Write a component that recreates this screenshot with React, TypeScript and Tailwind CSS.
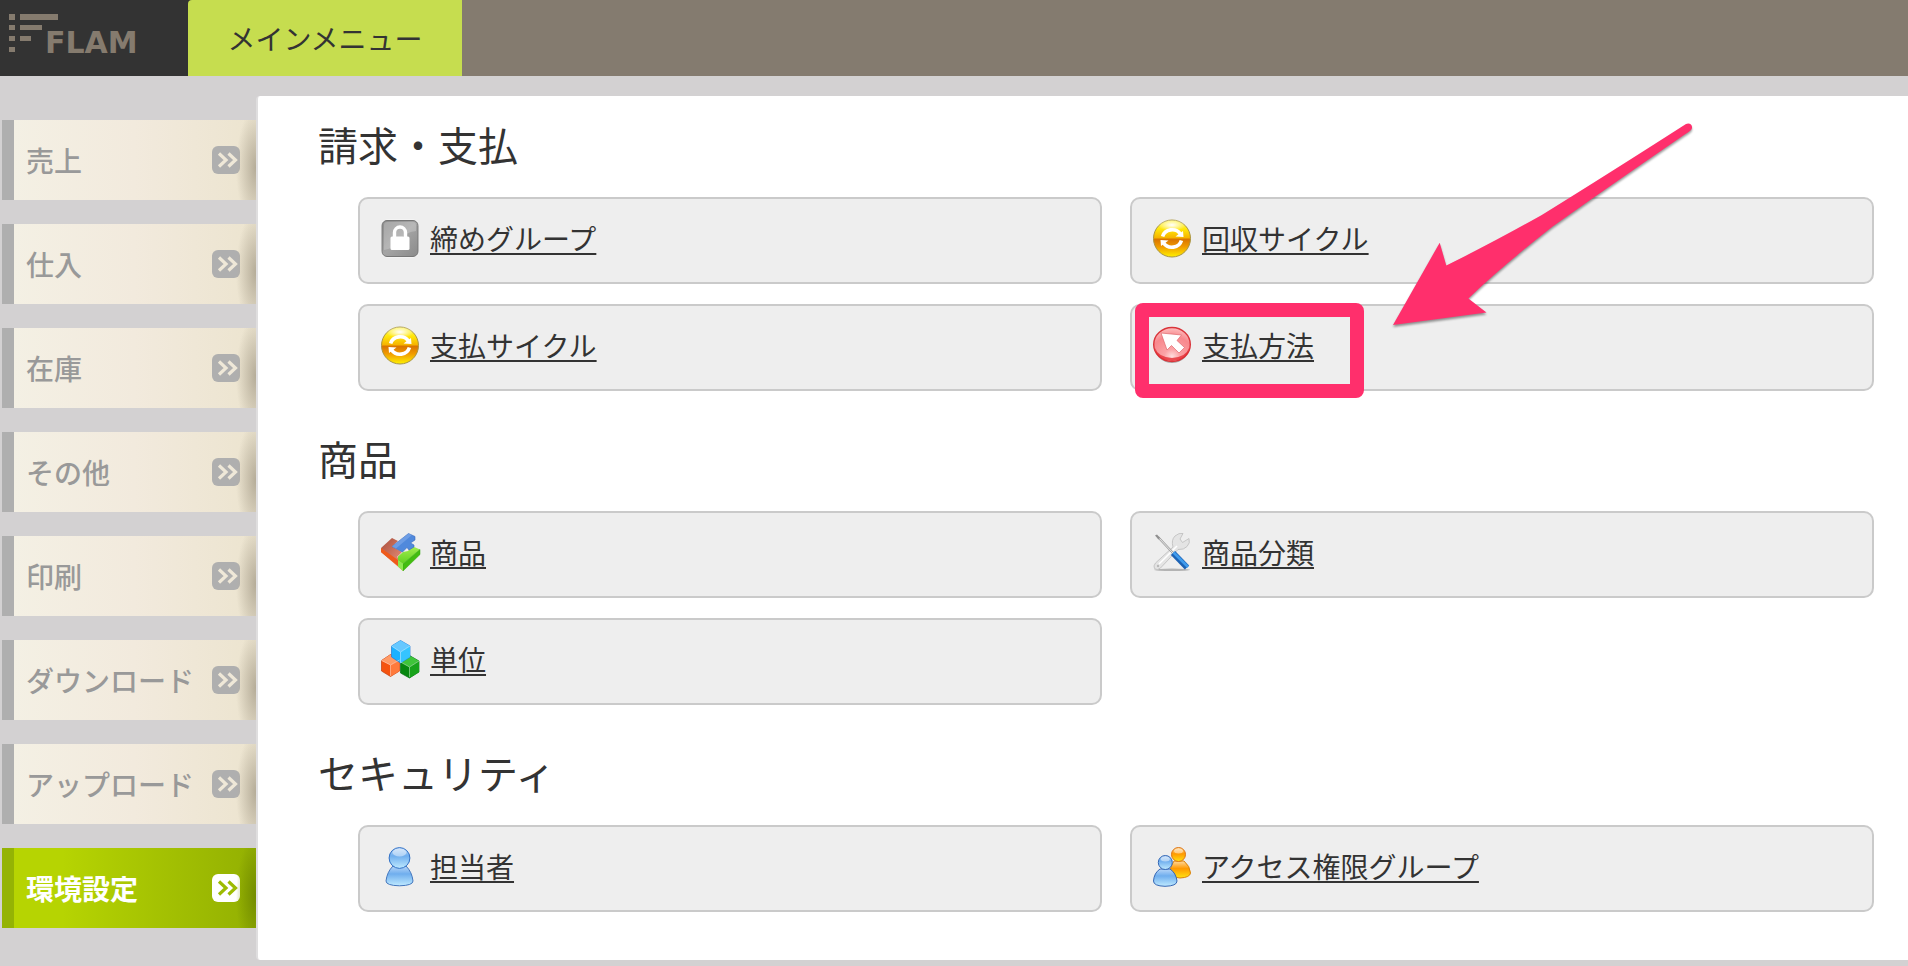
import type { ReactNode } from 'react'
import clsx from 'clsx'

interface MenuLink {
  label: string
  icon: ReactNode
  highlighted?: boolean
}

interface MenuSection {
  title: string
  links: MenuLink[]
}

const ICON_CLASS = 'w-[38px] h-[38px] shrink-0 overflow-visible'

function LockIcon() {
  return (
    <svg viewBox="0 0 38 38" className={ICON_CLASS} aria-hidden="true">
      <defs>
        <linearGradient id="lock-bg" x1="0" y1="0" x2="1" y2="1">
          <stop offset="0" stopColor="#8c8c8c" />
          <stop offset="0.5" stopColor="#a4a4a4" />
          <stop offset="1" stopColor="#8a8a8a" />
        </linearGradient>
      </defs>
      <rect x="0" y="0.5" width="38" height="38" rx="6" fill="#fafafa" />
      <rect x="1" y="1.5" width="36" height="36" rx="5" fill="url(#lock-bg)" stroke="#777" />
      <path d="M3 6 Q3 3 6 3 H32 Q35 3 35 6 V12 Q24 13 18 22 Q12 30 3 31 Z" fill="#fff" opacity="0.22" />
      <path d="M13.5 18 V13.5 a5.5 5.5 0 0 1 11 0 V18" fill="none" stroke="#fff" strokeWidth="3.4" />
      <rect x="9.5" y="17.5" width="19" height="13.5" rx="1.5" fill="#fff" />
    </svg>
  )
}

function CycleIcon() {
  return (
    <svg viewBox="0 0 38 38" className={ICON_CLASS} aria-hidden="true">
      <defs>
        <linearGradient id="cycle-bg" x1="0" y1="0" x2="0" y2="1">
          <stop offset="0" stopColor="#fff75a" />
          <stop offset="0.25" stopColor="#ffe60a" />
          <stop offset="0.48" stopColor="#f6b400" />
          <stop offset="0.52" stopColor="#d97400" />
          <stop offset="0.72" stopColor="#f09a00" />
          <stop offset="1" stopColor="#fff200" />
        </linearGradient>
        <radialGradient id="cycle-shine">
          <stop offset="0" stopColor="#fff" />
          <stop offset="1" stopColor="#fff" stopOpacity="0" />
        </radialGradient>
      </defs>
      <circle cx="19" cy="19.5" r="18.5" fill="url(#cycle-bg)" stroke="#a89440" />
      <ellipse cx="19" cy="6" rx="14" ry="6" fill="url(#cycle-shine)" />
      <g fill="none" stroke="#fff" strokeWidth="3.6">
        <path d="M9.6 17.5 A9.8 9 0 0 1 27.4 15" />
        <path d="M28.4 21.5 A9.8 9 0 0 1 10.6 24" />
      </g>
      <path d="M30 12 L30.5 18 L22.500 17.5 Z M8 27 L7.500 21 L15.500 21.5 Z" fill="#fff" />
    </svg>
  )
}

function PointerIcon() {
  return (
    <svg viewBox="0 0 38 38" className={ICON_CLASS} aria-hidden="true">
      <defs>
        <radialGradient id="pointer-bg" cx="0.5" cy="0.85" r="0.85">
          <stop offset="0" stopColor="#ffdede" />
          <stop offset="0.25" stopColor="#fba3a6" />
          <stop offset="0.7" stopColor="#f8888d" />
          <stop offset="1" stopColor="#fdc0c0" />
        </radialGradient>
      </defs>
      <ellipse cx="19" cy="20" rx="18" ry="17" fill="#8e8e8e" opacity="0.7" />
      <ellipse cx="19" cy="18.5" rx="18.3" ry="17" fill="url(#pointer-bg)" stroke="#d9343a" strokeWidth="1.4" />
      <path d="M2 22 Q3 34 19 35 Q35 34 36 22 Q33 31 19 32 Q5 31 2 22 Z" fill="#e3262c" opacity="0.75" />
      <path
        d="M8 7 L28.5 9 L24 14.5 L31.5 21.5 L26 27 L18.5 19.5 L14 24 Z"
        fill="#fff"
        stroke="#e0666b"
        strokeWidth="0.7"
      />
    </svg>
  )
}

function PuzzleIcon() {
  return (
    <svg viewBox="0 0 38 38" className={ICON_CLASS} aria-hidden="true">
      <defs>
        <linearGradient id="puzzle-orange" x1="0" y1="0" x2="1" y2="1">
          <stop offset="0" stopColor="#e0440c" />
          <stop offset="1" stopColor="#ffa066" />
        </linearGradient>
        <linearGradient id="puzzle-brown" x1="0" y1="0" x2="1" y2="1">
          <stop offset="0" stopColor="#a94e3c" />
          <stop offset="1" stopColor="#e58e78" />
        </linearGradient>
        <linearGradient id="puzzle-green" x1="0" y1="0" x2="0" y2="1">
          <stop offset="0" stopColor="#a5ee52" />
          <stop offset="1" stopColor="#5fd020" />
        </linearGradient>
      </defs>
      <path d="M0 15 L22 31 V38 L0 19 Z" fill="url(#puzzle-orange)" />
      <path d="M0 15 L11 5 L17 8 L11 13.5 L21 19 L16 24 L19 26 L17 29 Z" fill="url(#puzzle-brown)" />
      <path d="M0 15 L17 27 V33 L0 19 Z" fill="#ee5a1c" />
      <path d="M17 23.5 L22 19 L27 18 L31 13 L39 16.5 L22 31 L17 27.5 Z" fill="url(#puzzle-green)" />
      <path d="M22 31 L39 16.5 V21.5 L22 38 Z" fill="#43bd10" stroke="#2fa509" strokeWidth="0.5" />
      <path d="M17 27 L22 31 V38 L17 33.5 Z" fill="#8be84e" />
      <path
        d="M11 13.5 L27.5 0.5 L34 3.5 V7 L29.5 10 L33 12 V14 L28 17 L26 14.5 L21.5 19 Z"
        fill="#5089dc"
        stroke="#3568bd"
        strokeWidth="0.6"
      />
      <path d="M11 13.5 L27.5 0.5 L31 2 L15 15.5 Z" fill="#8ab2ee" opacity="0.5" />
    </svg>
  )
}

function ToolsIcon() {
  return (
    <svg viewBox="0 0 38 38" className={ICON_CLASS} aria-hidden="true">
      <ellipse cx="19" cy="36.8" rx="18" ry="1.2" fill="#9a9a9a" opacity="0.7" />
      <path
        d="M20 14 Q18 7 22 3 Q26 -0.5 30 0.5 L27 6 L29.5 9.5 L36 5.5 Q37.5 10 34 13.5 Q31 17 25 16.5 L7.5 35 Q4 38 1.500 35.5 Q0 33 2.500 30 Z"
        fill="#e4e4e4"
        stroke="#bcbcbc"
        strokeWidth="0.8"
      />
      <path d="M6 31 L24 13" stroke="#fff" strokeWidth="1.6" />
      <circle cx="5" cy="33" r="1.2" fill="#b8b8b8" />
      <path d="M5 4 L20 20" stroke="#9b9b9b" strokeWidth="2.2" />
      <path d="M5 4 L20 20" stroke="#f4f4f4" strokeWidth="0.9" />
      <path d="M2 2.5 L4 1.5 L7 5 L5.5 6.5 Z" fill="#8f8f8f" />
      <path d="M20 20 L34 34.5" stroke="#1c62b4" strokeWidth="6" strokeLinecap="butt" />
      <path d="M20.5 19.5 L35 34" stroke="#3f9bec" strokeWidth="2.6" />
    </svg>
  )
}

function CubesIcon() {
  return (
    <svg viewBox="0 0 38 38" className={ICON_CLASS} aria-hidden="true">
      <g strokeWidth="0.7" strokeLinejoin="round">
        <g stroke="#c23c0c">
          <path d="M0.5 20.5 L9.5 14.5 L18.5 20 V31 L9.5 36.5 L0.5 31 Z" fill="#f5530f" />
          <path d="M0.5 20.5 L9.5 14.5 L18.5 20 L9.5 25 Z" fill="#ff9a66" stroke="none" />
          <path d="M9.5 25 L18.5 20 V31 L9.5 36.5 Z" fill="#ff7a3c" stroke="none" />
        </g>
        <g stroke="#067012">
          <path d="M19.5 22 L28.5 15.5 L38 21 V32 L28.5 38 L19.5 33 Z" fill="#07870f" />
          <path d="M19.5 22 L28.5 15.5 L38 21 L28.5 27 Z" fill="#3fc43a" stroke="none" />
          <path d="M28.5 27 L38 21 V32 L28.5 38 Z" fill="#18a31b" stroke="none" />
        </g>
        <g stroke="#2179d6">
          <path d="M10.5 6 L19.5 0.5 L29 6 V17 L19.5 23 L10.5 17 Z" fill="#1cb1ff" />
          <path d="M10.5 6 L19.5 0.5 L29 6 L19.5 12 Z" fill="#66c8ff" stroke="none" />
          <path d="M19.5 12 L29 6 V17 L19.5 23 Z" fill="#35c4ff" stroke="none" />
        </g>
      </g>
      <g stroke="#fff" strokeWidth="0.7" fill="none" opacity="0.6">
        <path d="M10.5 6 L19.5 12 L29 6 M19.5 12 V23" />
        <path d="M0.5 20.5 L9.5 25 L18.5 20 M9.5 25 V36" />
        <path d="M19.5 22 L28.5 27 L38 21 M28.5 27 V37" />
      </g>
    </svg>
  )
}

function PersonGradients() {
  return (
    <defs>
      <linearGradient id="person-blue" x1="0" y1="0" x2="0" y2="1">
        <stop offset="0" stopColor="#b9d6f8" />
        <stop offset="0.4" stopColor="#6faeee" />
        <stop offset="1" stopColor="#bfeaff" />
      </linearGradient>
      <linearGradient id="person-orange" x1="0" y1="0" x2="0" y2="1">
        <stop offset="0" stopColor="#ffd9a0" />
        <stop offset="0.45" stopColor="#ff9900" />
        <stop offset="1" stopColor="#ffe312" />
      </linearGradient>
    </defs>
  )
}

function PersonIcon() {
  return (
    <svg viewBox="0 0 38 38" className={ICON_CLASS} aria-hidden="true">
      <PersonGradients />
      <path
        d="M12 19 H25 Q31 25 32 34 Q32 38.5 18.5 38.8 Q5 38.5 5 34 Q6 25 12 19 Z"
        fill="url(#person-blue)"
        stroke="#4376bd"
      />
      <circle cx="18.5" cy="11" r="10.4" fill="url(#person-blue)" stroke="#2e6fc6" />
      <ellipse cx="18.5" cy="5.5" rx="7" ry="4" fill="#fff" opacity="0.45" />
    </svg>
  )
}

function GroupIcon() {
  return (
    <svg viewBox="0 0 38 38" className={ICON_CLASS} aria-hidden="true">
      <PersonGradients />
      <path
        d="M21 14 H31 Q37 19 37.5 26 Q37 30.5 27 31 Q17 30 17 26 Q17 19 21 14 Z"
        fill="url(#person-orange)"
        stroke="#d9820a"
      />
      <circle cx="25.5" cy="7.5" r="7" fill="url(#person-orange)" stroke="#dd7411" />
      <ellipse cx="25.5" cy="4" rx="4.5" ry="2.5" fill="#fff" opacity="0.45" />
      <path
        d="M7 22 H17 Q23 26 24 34 Q24 39 12 39.3 Q0.5 39 0.5 34 Q1 26 7 22 Z"
        fill="url(#person-blue)"
        stroke="#3467b5"
      />
      <circle cx="12.3" cy="15.5" r="7" fill="url(#person-blue)" stroke="#3467b5" />
      <ellipse cx="12.3" cy="12" rx="4.5" ry="2.5" fill="#fff" opacity="0.45" />
    </svg>
  )
}

const sideItems = ['売上', '仕入', '在庫', 'その他', '印刷', 'ダウンロード', 'アップロード', '環境設定']
const activeItem = '環境設定'

const sections: MenuSection[] = [
  {
    title: '請求・支払',
    links: [
      { label: '締めグループ', icon: <LockIcon /> },
      { label: '回収サイクル', icon: <CycleIcon /> },
      { label: '支払サイクル', icon: <CycleIcon /> },
      { label: '支払方法', icon: <PointerIcon />, highlighted: true },
    ],
  },
  {
    title: '商品',
    links: [
      { label: '商品', icon: <PuzzleIcon /> },
      { label: '商品分類', icon: <ToolsIcon /> },
      { label: '単位', icon: <CubesIcon /> },
    ],
  },
  {
    title: 'セキュリティ',
    links: [
      { label: '担当者', icon: <PersonIcon /> },
      { label: 'アクセス権限グループ', icon: <GroupIcon /> },
    ],
  },
]

function Logo() {
  return (
    <svg width="188" height="76" viewBox="0 0 188 76" role="img" aria-label="FLAM">
      <g fill="#857b6e">
        <rect x="9" y="14" width="6" height="6" />
        <rect x="9" y="25" width="6" height="5" />
        <rect x="9" y="36" width="6" height="5" />
        <rect x="9" y="47" width="6" height="5" />
        <rect x="20" y="14" width="38" height="6" />
        <rect x="20" y="25" width="22" height="5" />
        <rect x="20" y="36" width="11" height="5" />
        <text x="45" y="53" fontFamily="DejaVu Sans, sans-serif" fontSize="30" fontWeight="700">
          FLAM
        </text>
      </g>
    </svg>
  )
}

function Header() {
  return (
    <header className="flex h-[76px] bg-[#847b6f]">
      <a href="#home" className="bg-[#333]">
        <Logo />
      </a>
      <div className="bg-[#333]">
        <a
          href="#menu"
          className="flex h-full w-[274px] items-center justify-center rounded-tl bg-[#c6dd4f] text-[28px]"
        >
          メインメニュー
        </a>
      </div>
    </header>
  )
}

function SideItem({ label, active }: { label: string; active: boolean }) {
  return (
    <a
      href={`#${label}`}
      className={clsx(
        'relative flex h-20 items-center justify-between border-l-12 pr-4 pl-3 text-[28px] whitespace-nowrap',
        active
          ? 'border-[#94b304] bg-linear-to-r from-[#b6d402] from-20% to-[#93b002] font-bold text-white'
          : 'border-[#afafaf] bg-linear-to-r from-[#f4f0e4] via-[#f2eadd] to-[#ece4cf] font-medium text-[#999]'
      )}
    >
      {label}
      <svg width="28" height="28" viewBox="0 0 28 28" className="shrink-0" aria-hidden="true">
        <rect width="28" height="28" rx="6" fill={active ? '#fff' : '#afafaf'} />
        <path
          d="M7 7.5 L14 14 L7 20.5 M16.5 7.5 L23.5 14 L16.5 20.5"
          fill="none"
          stroke={active ? '#9dbb02' : '#efe8d8'}
          strokeWidth="3.2"
        />
      </svg>
      {/* shade where the tab slides under the panel */}
      <span
        className={clsx(
          'absolute inset-y-0 right-0 w-5',
          active
            ? 'bg-[radial-gradient(ellipse_100%_75%_at_100%_60%,#738c00_0%,transparent_100%)]'
            : 'bg-[radial-gradient(ellipse_100%_75%_at_100%_60%,#b5ac98_0%,transparent_100%)]'
        )}
      />
    </a>
  )
}

function Annotation() {
  return (
    <>
      <span className="pointer-events-none absolute -top-px left-[5px] h-[95px] w-[229px] rounded-lg border-14 border-[#ff2f6c]" />
      <svg
        width="308"
        height="224"
        viewBox="0 0 308 224"
        className="pointer-events-none absolute -top-[184px] left-[260px] drop-shadow-[0_2px_1px_rgba(0,0,0,0.4)]"
        aria-hidden="true"
      >
        <path
          d="M3 205 L49.7 122.7 L56.3 145.5 Q102 123 151.800 95 Q218 54 296 4 C300 2 304 6 301 10 Q299 12 294 15 Q214 70 162 107 Q110 148 78.400 178.500 L96.500 192.500 Z"
          fill="#ff2f6c"
        />
      </svg>
    </>
  )
}

function LinkCard({ link }: { link: MenuLink }) {
  return (
    <li className="relative">
      <div className="flex h-[87px] items-center gap-[11px] rounded-[10px] border-2 border-[#cacaca] bg-[#eee] px-[21px] pb-[6px]">
        {link.icon}
        <a href={`#${link.label}`} className="text-[28px] underline decoration-2 underline-offset-[3px]">
          {link.label}
        </a>
      </div>
      {link.highlighted && <Annotation />}
    </li>
  )
}

export default function App() {
  return (
    <div className="min-h-screen bg-[#d3d1d2] font-['Noto_Sans_CJK_JP',sans-serif] text-[#333]">
      <Header />
      <div className="flex pt-5">
        <nav className="flex w-64 shrink-0 flex-col gap-6 pt-6 pl-[2px]">
          {sideItems.map(item => (
            <SideItem key={item} label={item} active={item === activeItem} />
          ))}
        </nav>
        <main className="flex min-w-0 grow flex-col gap-[43px] rounded-l border-l-2 border-[#dfdedf] bg-white pt-6 pr-[34px] pb-12 pl-[60px]">
          {sections.map(section => (
            <section key={section.title}>
              <h2 className="text-[40px] leading-12">{section.title}</h2>
              <ul className="mt-[29px] ml-10 grid grid-cols-2 gap-x-7 gap-y-5">
                {section.links.map(link => (
                  <LinkCard key={link.label} link={link} />
                ))}
              </ul>
            </section>
          ))}
        </main>
      </div>
    </div>
  )
}
